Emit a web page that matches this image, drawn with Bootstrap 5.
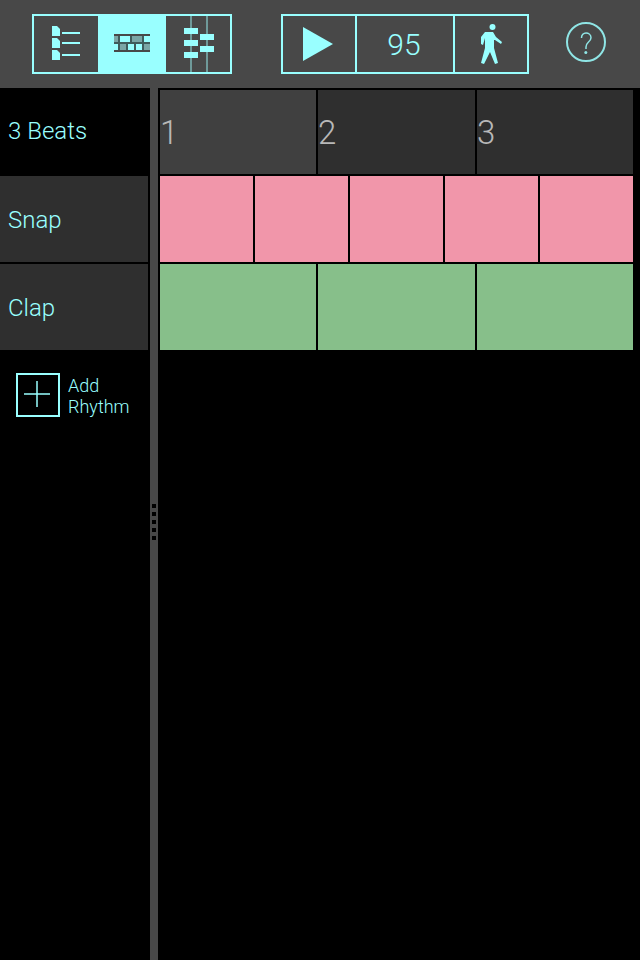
<!doctype html>
<html lang="en">
<head>
<meta charset="utf-8">
<title>Rhythm</title>
<link href="https://cdn.jsdelivr.net/npm/bootstrap@5.3.0/dist/css/bootstrap.min.css" rel="stylesheet">
<style>
html,body{background:#000;margin:0;height:960px;overflow:hidden}
body{font-family:Roboto,"Liberation Sans",sans-serif;font-weight:300;color:#9ff}
.topbar{height:88px;background:#484848;padding:14px 0 0 32px}
.seg-group{height:60px;border:2px solid #9ff}
.seg-a{width:200px}
.seg-b{width:248px;margin-left:49px}
.seg{height:56px;flex:none}
.seg svg{display:block}
.seg-on{background:#9ff}
.seg-line{border-left:2px solid #9ff}
.tempo{font-size:30px;line-height:58px;text-align:center;padding-right:2px;color:#9ff}
.help{margin-left:37px;margin-top:8px;width:40px;height:40px}
.body-area{height:872px;padding-top:2px}
.names{width:148px;flex:none}
.name-row{height:86px;margin-bottom:2px;font-size:24px;padding-left:8px;color:#9ff;display:flex;align-items:center;padding-top:2px}
.name-head{height:84px;padding-top:0;padding-bottom:2px}
.name-dark{background:#2f2f2f}
.splitter{width:8px;margin-left:2px;margin-top:-2px;background:#484848;flex:none;padding-top:416px;gap:4px}
.grip{width:4px;height:4px;background:#000;margin-left:2px}
.tracks{margin-left:2px;width:473px;flex:none}
.track{display:grid;height:84px;gap:2px;margin-bottom:2px}
.track-three{grid-template-columns:156px 157px 156px}
.track-five{grid-template-columns:93px 93px 93px 93px 93px}
.track-tall{height:86px}
.beat{background:#2f2f2f;color:#b8b8b8;font-size:33px;padding-left:0;display:flex;align-items:center;padding-top:2px}
.beat-on{background:#404040}
.pink{background:#f196aa}
.green{background:#87bf8a}
.add-row{padding:21px 0 0 16px}
.add-box{width:44px;height:44px;border:2px solid #9ff;flex:none}
.add-text{margin-left:8px;margin-top:2px;font-size:18px;line-height:21px;color:#9ff}
</style>
</head>
<body>
<div class="topbar d-flex align-items-start">
  <div class="seg-group seg-a d-flex">
    <div class="seg" style="width:64px">
      <svg width="64" height="56" viewBox="34 16 64 56">
        <g fill="#9ff">
          <path d="M52 26h5l3 3v7h-8z"/><path d="M52 38h5l3 3v7h-8z"/><path d="M52 50h5l3 3v7h-8z"/>
          <rect x="62" y="32" width="18" height="2"/><rect x="62" y="42" width="18" height="2"/><rect x="62" y="54" width="18" height="2"/>
        </g>
      </svg>
    </div>
    <div class="seg seg-on" style="width:68px">
      <svg width="68" height="56" viewBox="98 16 68 56">
        <rect x="114" y="34" width="36" height="2" fill="#484848"/>
        <rect x="114" y="50" width="36" height="2" fill="#484848"/>
        <rect x="114" y="36" width="36" height="14" fill="#3f5c5c"/>
        <g fill="#7aa6a6">
          <rect x="114" y="36" width="4" height="6"/><rect x="132" y="36" width="10" height="6"/>
          <rect x="120" y="44" width="6" height="6"/><rect x="144" y="44" width="6" height="6"/>
        </g>
        <g fill="#9ff">
          <rect x="120" y="36" width="10" height="6"/><rect x="144" y="36" width="6" height="6"/>
          <rect x="114" y="44" width="4" height="6"/><rect x="128" y="44" width="6" height="6"/><rect x="136" y="44" width="6" height="6"/>
        </g>
      </svg>
    </div>
    <div class="seg" style="width:64px">
      <svg width="64" height="56" viewBox="166 16 64 56">
        <rect x="190" y="16" width="2" height="56" fill="#6f9a9a"/>
        <rect x="206" y="16" width="2" height="56" fill="#6f9a9a"/>
        <g fill="#9ff">
          <rect x="184" y="28" width="14" height="6"/><rect x="184" y="40" width="14" height="6"/><rect x="184" y="52" width="14" height="6"/>
          <rect x="200" y="34" width="14" height="6"/><rect x="200" y="46" width="14" height="6"/>
        </g>
      </svg>
    </div>
  </div>
  <div class="seg-group seg-b d-flex">
    <div class="seg" style="width:72px">
      <svg width="72" height="56" viewBox="283 16 72 56"><path d="M303 27l30 17-30 17z" fill="#9ff"/></svg>
    </div>
    <div class="seg seg-line tempo" style="width:98px">95</div>
    <div class="seg seg-line" style="width:74px">
      <svg width="72" height="56" viewBox="455 16 72 56">
        <circle cx="492.500" cy="27" r="3" fill="#9ff"/>
        <path fill="#9ff" d="M485 32L493 32L496 37L502 42L501 44L495 40L494 40L494 48L498 63L495 64L490 52L484 64L481 63L485 48L485 38L483 45L481 44L481 37Z"/>
      </svg>
    </div>
  </div>
  <svg class="help" viewBox="0 0 40 40">
    <circle cx="20" cy="20" r="19" fill="none" stroke="#8fe5e5" stroke-width="2"/>
    <path d="M15.500 16c0-3.200 2-5 4.500-5s5 1.800 5 4.700c0 2-1.200 3.200-2.700 4.500-1.400 1.200-2.300 2.500-2.300 4.800v2" fill="none" stroke="#8fe5e5" stroke-width="1.500"/>
    <circle cx="19.800" cy="30.500" r="1.500" fill="#8fe5e5"/>
  </svg>
</div>
<div class="body-area d-flex">
  <div class="names">
    <div class="name-row name-head">3 Beats</div>
    <div class="name-row name-dark">Snap</div>
    <div class="name-row name-dark">Clap</div>
    <div class="add-row d-flex">
      <div class="add-box">
        <svg width="40" height="40" viewBox="0 0 40 40" class="d-block"><path d="M6 19h26M19 6v26" stroke="#9ff" stroke-width="1.500" fill="none"/></svg>
      </div>
      <div class="add-text">Add<br>Rhythm</div>
    </div>
  </div>
  <div class="splitter d-flex flex-column">
    <div class="grip"></div><div class="grip"></div><div class="grip"></div><div class="grip"></div><div class="grip"></div>
  </div>
  <div class="tracks">
    <div class="track track-three">
      <div class="beat beat-on">1</div><div class="beat">2</div><div class="beat">3</div>
    </div>
    <div class="track track-tall track-five">
      <div class="pink"></div><div class="pink"></div><div class="pink"></div><div class="pink"></div><div class="pink"></div>
    </div>
    <div class="track track-tall track-three">
      <div class="green"></div><div class="green"></div><div class="green"></div>
    </div>
  </div>
</div>
<script src="https://cdn.jsdelivr.net/npm/bootstrap@5.3.0/dist/js/bootstrap.bundle.min.js"></script>
</body>
</html>
